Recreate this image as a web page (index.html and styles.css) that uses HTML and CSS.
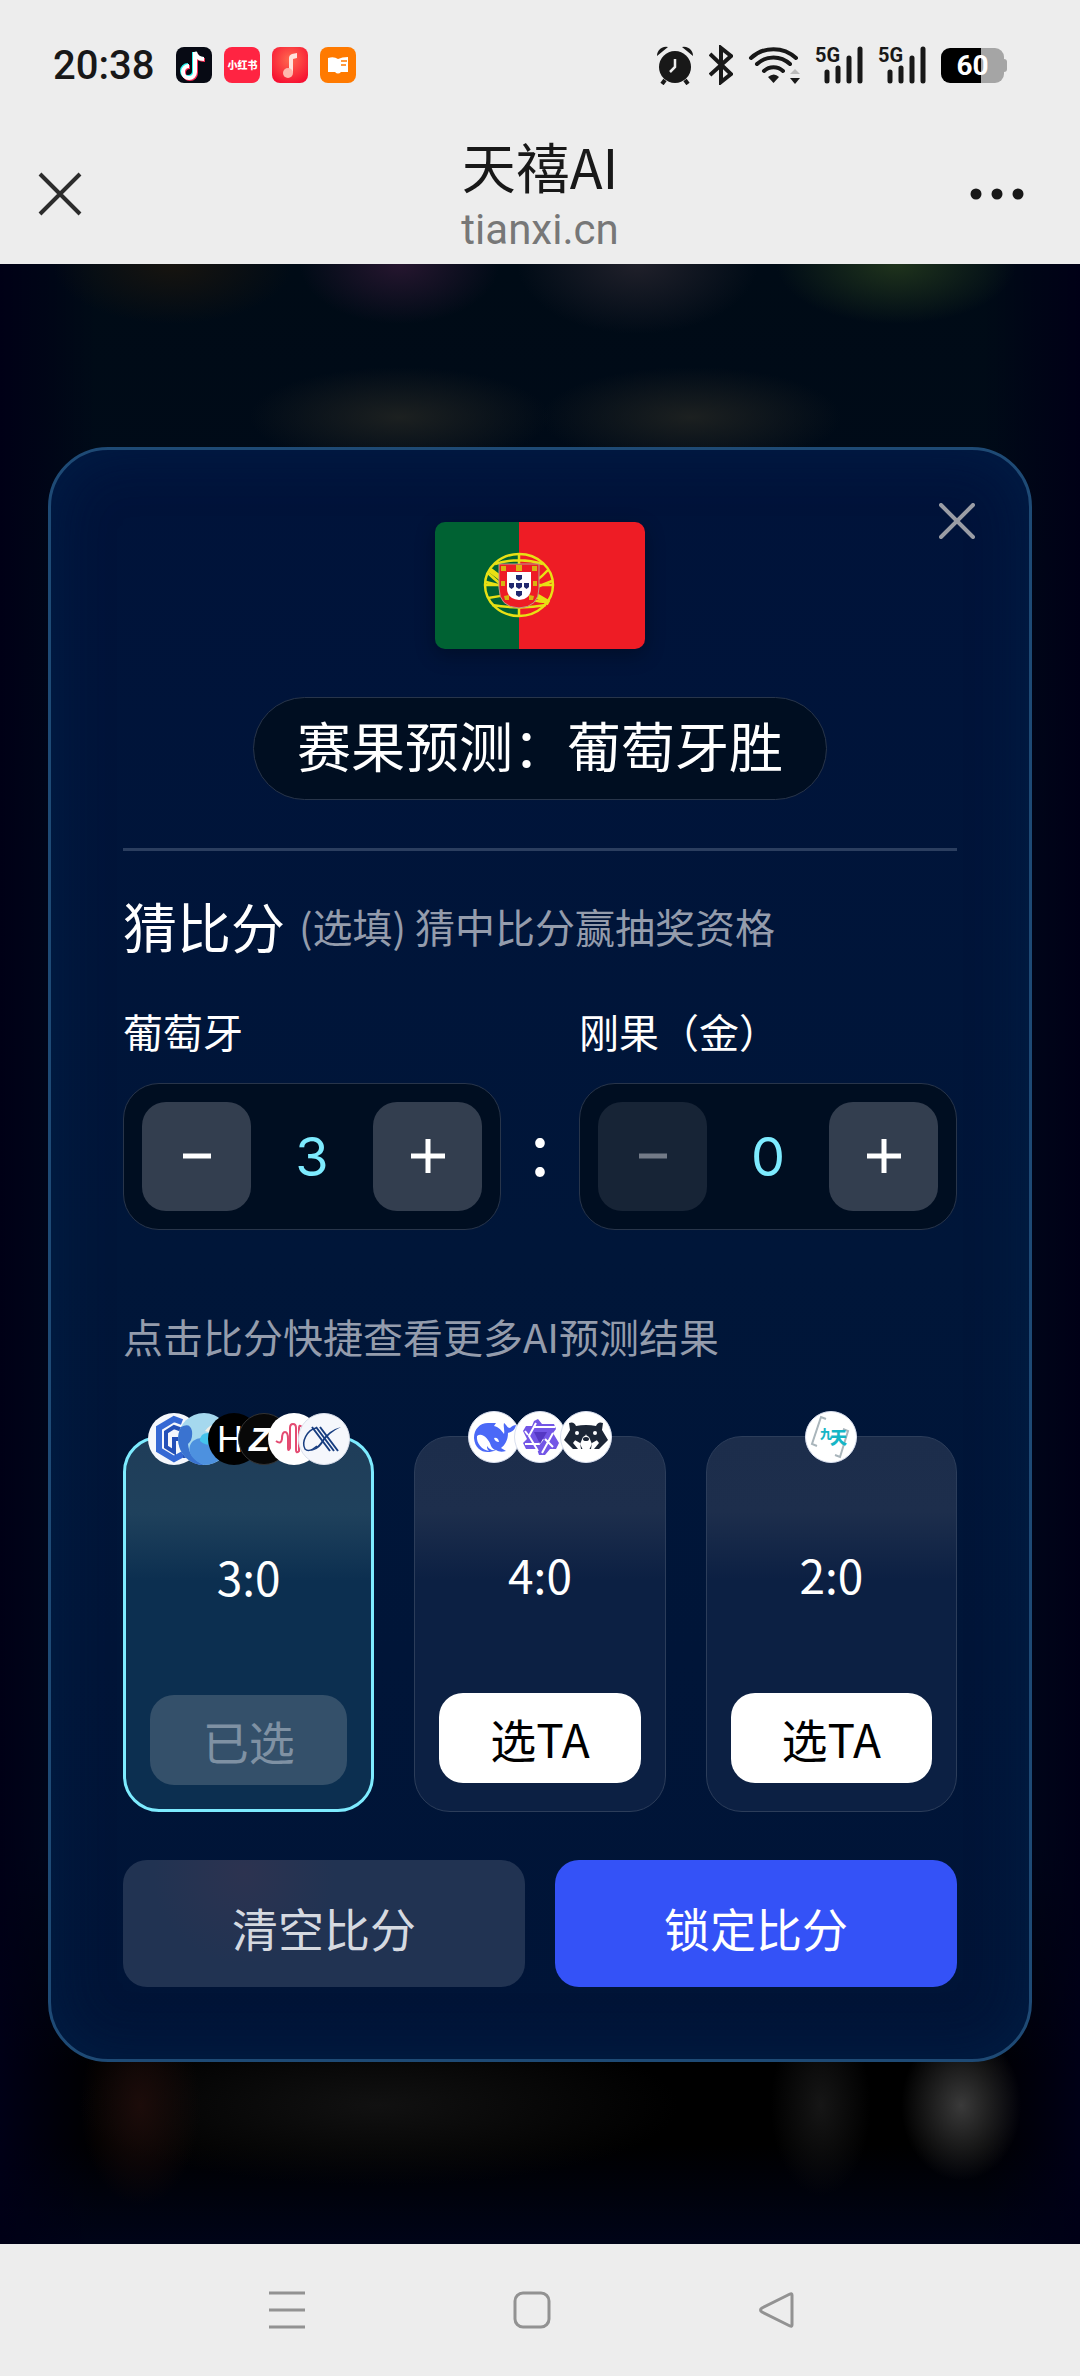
FILE: index.html
```html
<!DOCTYPE html>
<html lang="zh-CN">
<head>
  <meta charset="UTF-8">
  <meta name="viewport" content="width=device-width, initial-scale=1.0">
  <title>天禧AI</title>
  <link rel="stylesheet" href="styles.css">
</head>
<body>
  <div class="status">
    <div class="status-left">
      <span class="time">20:38</span>
      <span class="app tiktok">
        <svg viewBox="0 0 36 36" width="36" height="36" fill="none" stroke-width="4">
          <g stroke="#25f4ee"><path d="M18 5v19a6 6 0 1 1-6-6M18 5c1 4 4 7 9 7"/></g>
          <g stroke="#fe2c55"><path d="M20 7v19a6 6 0 1 1-6-6M20 7c1 4 4 6 9 6"/></g>
          <g stroke="#fff"><path d="M19 5v20a6 6 0 1 1-6-6M19 5c1 5 4 7 9 7"/></g>
        </svg>
      </span>
      <span class="app red">小红书</span>
      <span class="app music">
        <svg viewBox="0 0 36 36" width="36" height="36">
          <path d="M17 26V11q0-3 3-4l5-1v5l-4 1v14" fill="#ffe3dc"/>
          <circle cx="16" cy="26" r="5" fill="#ffb8ae"/>
        </svg>
      </span>
      <span class="app book">
        <svg viewBox="0 0 36 36" width="36" height="36">
          <path d="M8 11q6-2 10 1 4-2 10-2v15h-7q-3 3-6 0H8z" fill="#fff"/>
          <path d="M21 14h6M21 18h5" stroke="#ff7a00" stroke-width="1.5"/>
        </svg>
      </span>
    </div>
    <div class="status-right">
      <svg viewBox="0 0 38 40" width="38" height="40">
        <circle cx="19" cy="22" r="16" fill="#181818"/>
        <path d="M1 11a9 9 0 0 1 11-9zM37 11a9 9 0 0 0-11-9z" fill="#181818"/>
        <path d="M9 35l-3 4M29 35l3 4" stroke="#181818" stroke-width="4"/>
        <path d="M19 14v8l-5 5" fill="none" stroke="#ededed" stroke-width="2.5"/>
      </svg>
      <svg viewBox="0 0 24 40" width="24" height="40" fill="none" stroke="#181818" stroke-width="4">
        <path d="M1 9l21 20-10 8V3l10 8L1 30"/>
      </svg>
      <svg viewBox="0 0 52 40" width="52" height="40" fill="none" stroke="#181818" stroke-width="4" stroke-linecap="round">
        <path d="M3 13a33 33 0 0 1 45 0M9 19a24 24 0 0 1 33 0M16 26a14 14 0 0 1 19 0"/>
        <path d="M20 32q6-5 11 0l-5.500 6z" fill="#181818" stroke="none"/>
        <path d="M42 29l5-5 5 5z" fill="#bbb" stroke="none"/>
        <path d="M42 33h10l-5 6z" fill="#181818" stroke="none"/>
      </svg>
      <span class="signal">
        <b>5G</b>
        <svg viewBox="0 0 48 40" width="48" height="40"><path d="M12 27v9M23 23v13M34 13v23M45 4v32" stroke="#181818" stroke-width="5" stroke-linecap="round"/></svg>
      </span>
      <span class="signal">
        <b>5G</b>
        <svg viewBox="0 0 48 40" width="48" height="40"><path d="M12 27v9M23 23v13M34 13v23M45 4v32" stroke="#181818" stroke-width="5" stroke-linecap="round"/></svg>
      </span>
      <span class="battery">60</span>
    </div>
  </div>

  <header class="topbar">
    <button class="icon-btn" aria-label="关闭网页">
      <svg viewBox="0 0 44 44" width="44" height="44" stroke="#2c2c2c" stroke-width="4"><path d="M2 2l40 40M42 2L2 42"/></svg>
    </button>
    <div class="site">
      <h1>天禧AI</h1>
      <p>tianxi.cn</p>
    </div>
    <button class="icon-btn more" aria-label="更多">
      <svg viewBox="0 0 54 12" width="54" height="12" fill="#181818"><circle cx="6" cy="6" r="5.500"/><circle cx="27" cy="6" r="5.500"/><circle cx="48" cy="6" r="5.500"/></svg>
    </button>
  </header>

  <main class="stage">
    <section class="modal">
      <button class="close" aria-label="关闭">
        <svg viewBox="0 0 36 36" width="36" height="36" stroke="#9a9da5" stroke-width="4" stroke-linecap="round"><path d="M2 2l32 32M34 2L2 34"/></svg>
      </button>

      <svg class="flag" viewBox="0 0 210 127" width="210" height="127">
        <path fill="#006233" d="M0 0h84v127H0z"/>
        <path fill="#ee1c25" d="M84 0h126v127H84z"/>
        <g fill="none" stroke="#e8e014" stroke-width="2.5">
          <ellipse cx="84" cy="63" rx="34" ry="31"/>
          <path d="M84 32v62M50 63h68M53 51c18 18 44 30 60 29M53 76c20-2 44-10 60-28M57 83c18 3 38 3 54 0M60 42c16-5 32-5 48 0M51 60l24 6M117 59l-20 8"/>
          <path d="M55 48l12 9M102 74l12 7" stroke-width="5"/>
        </g>
        <path d="M64 42h40v24q0 19-20 20-20-1-20-20z" fill="#ee1c25" stroke="#b9a08c"/>
        <path d="M72 50h24v16q0 11-12 12-12-1-12-12z" fill="#fff"/>
        <path d="M81 53h6v4l-3 2-3-2zM81 61h6v4l-3 2-3-2zM81 69h6v4l-3 2-3-2zM74 61h5v4l-2.500 2-2.500-2zM89 61h5v4l-2.500 2-2.500-2z" fill="#20286e"/>
        <path d="M66 44h5v5h-5zM81 43h6v6h-6zM97 44h5v5h-5zM66 59h4v5h-4zM98 59h4v5h-4zM69 74l5-1v5h-4zM94 73l5 1-1 4h-4z" fill="#d9b310"/>
      </svg>

      <h2 class="result">赛果预测：葡萄牙胜</h2>
      <hr>

      <div class="guess-title">
        <h3>猜比分</h3>
        <p>(选填) 猜中比分赢抽奖资格</p>
      </div>

      <div class="score-row">
        <div class="team">
          <label for="home">葡萄牙</label>
          <div class="stepper">
            <button aria-label="减少"><svg viewBox="0 0 40 40" width="40" height="40"><path d="M6 20h28" stroke="#fff" stroke-width="5"/></svg></button>
            <input id="home" type="text" inputmode="numeric" value="3">
            <button aria-label="增加"><svg viewBox="0 0 40 40" width="40" height="40"><path d="M3 20h34M20 3v34" stroke="#fff" stroke-width="5"/></svg></button>
          </div>
        </div>
        <span class="colon">:</span>
        <div class="team">
          <label for="away">刚果（金）</label>
          <div class="stepper">
            <button aria-label="减少" disabled><svg viewBox="0 0 40 40" width="40" height="40"><path d="M6 20h28" stroke="#737b88" stroke-width="5"/></svg></button>
            <input id="away" type="text" inputmode="numeric" value="0">
            <button aria-label="增加"><svg viewBox="0 0 40 40" width="40" height="40"><path d="M3 20h34M20 3v34" stroke="#fff" stroke-width="5"/></svg></button>
          </div>
        </div>
      </div>

      <p class="hint">点击比分快捷查看更多AI预测结果</p>

      <div class="cards">
        <article class="card selected">
          <div class="avatars tight">
            <svg class="avatar" viewBox="0 0 52 52">
              <circle cx="26" cy="26" r="26" fill="#f5f7fc"/>
              <path d="M34 9l-8-3L11 15v22l15 9 13-7" fill="none" stroke="#3568d4" stroke-width="6"/>
              <path d="M37 18l-11-4-8 5v15l8 5V26h11v19" fill="none" stroke="#2450b8" stroke-width="4"/>
            </svg>
            <svg class="avatar" viewBox="0 0 52 52">
              <circle cx="26" cy="26" r="26" fill="#a5d8ee"/>
              <path d="M3 14q9-5 11 4 1 9-4 13 1 14 16 21A26 26 0 0 1 3 14" fill="#3a73d0"/>
              <path d="M26 52C11 46 8 35 15 28q8-6 17 0 8 7 20-3a26 26 0 0 1-26 27" fill="#4d91df"/>
              <path d="M22 28q0-8 8-8 8 1 7 7-5 9-15 1" fill="#44c3ec"/>
              <path d="M27 18q6-8 14-6-7 2-7 8z" fill="#f4efe5"/>
            </svg>
            <svg class="avatar" viewBox="0 0 52 52">
              <circle cx="26" cy="26" r="26" fill="#000"/>
              <text x="9" y="39" class="logo-h">H</text>
            </svg>
            <svg class="avatar" viewBox="0 0 52 52">
              <circle cx="26" cy="26" r="25.500" fill="#080808" stroke="#333"/>
              <text x="11" y="38" class="logo-z">Z</text>
            </svg>
            <svg class="avatar" viewBox="0 0 52 52">
              <circle cx="26" cy="26" r="26" fill="#fff"/>
              <path d="M8 28q5 4 6-2 0-7 3-7t3 7v9q0 4 2 0V15q0-4 3-4t3 4v22q0 4 3 1V15q0-4 3-1v20q4 3 5-3V20" fill="none" stroke="#e44b72" stroke-width="2"/>
            </svg>
            <svg class="avatar" viewBox="0 0 52 52">
              <circle cx="26" cy="26" r="25.500" fill="#f5f7fc" stroke="#dbe0ec"/>
              <path d="M14 14l18 24M18 14l18 24M22 14l18 24" stroke="#173d80" stroke-width="2" fill="none"/>
              <path d="M18 15C9 17 3 29 7 36q4 4 12-3" stroke="#173d80" stroke-width="1.5" fill="none"/>
              <path d="M43 14Q30 20 24 31q-5 7-13 7 7-2 12-9 7-12 20-15" fill="#173d80"/>
            </svg>
          </div>
          <p class="score">3:0</p>
          <button class="pick" disabled>已选</button>
        </article>

        <article class="card">
          <div class="avatars">
            <svg class="avatar" viewBox="0 0 52 52">
              <circle cx="26" cy="26" r="25.500" fill="#fff" stroke="#d9dfee"/>
              <path d="M6 27c0-9 6-15 14-15h8l-2 3c5 1 8 5 10 8 1-4-1-7 0-11 3 2 3 5 6 5 2-2 4-3 6-3-1 5-4 7-8 8 0 7-3 12-7 15l5 3c-4 1-7 1-10-1-10 5-21 1-22-12" fill="#4b69f7"/>
              <path d="M9 25c5-4 12 3 14 10 1 2 3 4 5 4-4 1-7-1-9-4 0 2 0 3 2 5-7-1-13-8-12-15" fill="#fff"/>
              <path d="M26 27q4-1 5 4-4 0-5-4" fill="#fff"/>
            </svg>
            <svg class="avatar" viewBox="0 0 52 52">
              <circle cx="26" cy="26" r="25.500" fill="#fff" stroke="#d9dfee"/>
              <path d="M20 10l4-2 4 5h12l2 5-3 4 6 10-3 6h-6l-5 6h-6l-2-6H12l-3-6 4-4-4-8 3-5h6z" fill="#7356e6"/>
              <path d="M20 16h21M22 12l-7 13 9 15M39 22L28 42M11 33h14l4-5M14 24l-3-4M31 28l8 8" stroke="#fff" stroke-width="2" fill="none"/>
              <path d="M20 21h13l-7 12z" fill="#5538c4"/>
            </svg>
            <svg class="avatar" viewBox="0 0 52 52">
              <circle cx="26" cy="26" r="25.500" fill="#fff" stroke="#d9dfee"/>
              <path d="M9 12q5-2 7 3 10-2 20 0 2-5 7-3l-1 7 6 10-9 9h-5l5-6-7-9H20l-7 9 5 6h-5l-9-9 6-10z" fill="#1c2636"/>
              <path d="M16 21h9l1 3 1-3h9l3 7-7 4-1 6h-10l-1-6-7-4z" fill="#1c2636"/>
              <path d="M20 33l3-7 3-2 3 2 3 7-3 6h-6z" fill="#fff"/>
              <ellipse cx="26" cy="28" rx="3" ry="2" fill="#1c2636"/>
              <circle cx="17" cy="22" r="2" fill="#fff"/><circle cx="35" cy="22" r="2" fill="#fff"/>
            </svg>
          </div>
          <p class="score">4:0</p>
          <button class="pick">选TA</button>
        </article>

        <article class="card">
          <div class="avatars">
            <svg class="avatar" viewBox="0 0 52 52">
              <circle cx="26" cy="26" r="25.500" fill="#fff" stroke="#d9dfee"/>
              <path d="M21 8l-5-2L7 33l5 2M38 18l5 2-8 26-5-2" fill="none" stroke="#a9b5bb" stroke-width="2"/>
              <text x="15" y="28" class="logo-jt">九<tspan class="big" dx="-2" dy="5">天</tspan></text>
            </svg>
          </div>
          <p class="score">2:0</p>
          <button class="pick">选TA</button>
        </article>
      </div>

      <div class="actions">
        <button class="action clear">清空比分</button>
        <button class="action lock">锁定比分</button>
      </div>
    </section>
  </main>

  <nav class="sysnav">
    <button class="icon-btn" aria-label="最近任务">
      <svg viewBox="0 0 38 38" width="38" height="38" stroke="#929292" stroke-width="3"><path d="M1 2h36M1 19h36M1 36h36"/></svg>
    </button>
    <button class="icon-btn" aria-label="主屏幕">
      <svg viewBox="0 0 38 38" width="38" height="38" fill="none" stroke="#929292" stroke-width="3"><rect x="2" y="2" width="34" height="34" rx="8"/></svg>
    </button>
    <button class="icon-btn" aria-label="返回">
      <svg viewBox="0 0 38 38" width="38" height="38" fill="none" stroke="#929292" stroke-width="3" stroke-linejoin="round"><path d="M34 4v30q0 2-2 1L4 21q-3-2 0-4L32 3q2-1 2 1z"/></svg>
    </button>
  </nav>
</body>
</html>
```

FILE: styles.css
```css
*{
  box-sizing: border-box;
}
body{
  margin: 0;
  min-height: 100vh;
  display: flex;
  flex-direction: column;
  background: #ededed;
  color: white;
  font-family: "Noto Sans CJK SC", sans-serif;
}
h1, h2, h3, p{
  margin: 0;
  font-weight: normal;
}
button{
  font-family: inherit;
  border: none;
  padding: 0;
  cursor: pointer;
}
svg{
  display: block;
}
.icon-btn{
  background: none;
}

/* phone status bar */
.status{
  display: flex;
  justify-content: space-between;
  align-items: center;
  height: 130px;
  padding: 0 76px 0 53px;
}
.status-left, .status-right{
  display: flex;
  align-items: center;
}
.status-left{
  gap: 12px;
}
.time{
  color: #181818;
  font-family: Roboto, sans-serif;
  font-size: 40px;
  font-weight: 500;
  margin-right: 10px;
}
.app{
  width: 36px;
  height: 36px;
  border-radius: 8px;
  overflow: hidden;
}
.tiktok{
  background: #070a14;
}
.red{
  background: #ff2442;
  font-size: 10px;
  font-weight: 900;
  line-height: 36px;
  text-align: center;
}
.music{
  background: radial-gradient(circle at 50% 35%, #ff6a50, #f5002c);
}
.book{
  background: #ff7a00;
}
.status-right{
  gap: 15px;
}
.signal{
  position: relative;
}
.signal b{
  position: absolute;
  left: 0;
  top: 0;
  color: #181818;
  font: 700 20px/20px Roboto, sans-serif;
}
.battery{
  position: relative;
  width: 63px;
  height: 35px;
  border-radius: 9px;
  background: linear-gradient(90deg, #000 40px, #a5a5a5 40px);
  font: 700 28px/36px Roboto, sans-serif;
  text-align: center;
}
.battery::after{
  content: "";
  position: absolute;
  right: -3px;
  top: 11px;
  width: 3px;
  height: 13px;
  border-radius: 0 3px 3px 0;
  background: #a5a5a5;
}

.topbar{
  display: grid;
  grid-template-columns: 1fr auto 1fr;
  align-items: center;
  justify-items: start;
  height: 134px;
  padding: 0 56px 10px 38px;
}
.topbar{
  padding-left: 38px;
  padding-right: 38px;
}
.more{
  justify-self: end;
  margin-right: 18px;
}
.site{
  text-align: center;
}
.site h1{
  color: #181818;
  font-size: 54px;
  line-height: 72px;
}
.site p{
  color: #777;
  font-family: Roboto, sans-serif;
  font-size: 42px;
  line-height: 56px;
}

/* dimmed page behind the dialog */
.stage{
  flex: 1;
  display: flex;
  align-items: center;
  padding: 48px;
  background:
    radial-gradient(60px 75px at 89% 93%, #3a3a3a, transparent),
    radial-gradient(50px 90px at 76% 93%, #161616, transparent),
    radial-gradient(60px 100px at 13% 93%, #1c0c0a, transparent),
    radial-gradient(300px 80px at 35% 93%, #111, transparent),
    radial-gradient(120px 60px at 16% 0, #17140f, transparent),
    radial-gradient(100px 60px at 37% 0, #26162f, transparent),
    radial-gradient(120px 70px at 59% 0, #20202a, transparent),
    radial-gradient(120px 60px at 83% 0, #1f331c, transparent),
    radial-gradient(150px 50px at 37% 153px, #1c2020, transparent),
    radial-gradient(150px 50px at 64% 153px, #1c2020, transparent),
    linear-gradient(90deg, #000016, transparent 9%, transparent 91%, #000016),
    linear-gradient(#000b16, #000a1c 30%, #000a1c 80%, #000 91%, #000 95%, #000418);
}
.modal{
  position: relative;
  flex: 1;
  min-width: 0;
  display: flex;
  flex-direction: column;
  padding: 72px;
  border: 3px solid #1e4a75;
  border-radius: 60px;
  background: linear-gradient(#00133a, #001639 50%, #001437);
  box-shadow: inset 0 0 60px rgba(0, 44, 90, 0.4);
}
.close{
  position: absolute;
  right: 54px;
  top: 53px;
  background: none;
}
.flag{
  align-self: center;
  border-radius: 10px;
  margin-bottom: 48px;
  box-shadow: 0 6px 20px rgba(0, 0, 0, 0.3);
}
.result{
  align-self: center;
  padding: 0 43px 8px;
  border: 1px solid #28354a;
  border-radius: 52px;
  background: #000e21;
  font-size: 54px;
  line-height: 93px;
}
hr{
  width: 100%;
  height: 3px;
  margin: 48px 0 36px;
  border: none;
  background: #2b3e5f;
}
.guess-title{
  display: flex;
  align-items: center;
  gap: 14px;
  margin-bottom: 36px;
}
.guess-title h3{
  font-size: 54px;
  line-height: 78px;
}
.guess-title p, .hint{
  color: #949cac;
  font-size: 40px;
  line-height: 60px;
}

.score-row{
  display: flex;
  align-items: flex-end;
}
.team{
  flex: 1;
  min-width: 0;
}
.team label{
  display: block;
  font-size: 40px;
  line-height: 60px;
  margin-bottom: 22px;
}
.stepper{
  display: flex;
  align-items: center;
  padding: 18px;
  border: 1px solid #28354a;
  border-radius: 36px;
  background: #000e21;
}
.stepper button{
  flex: none;
  display: flex;
  justify-content: center;
  align-items: center;
  width: 109px;
  height: 109px;
  border-radius: 24px;
  background: #333e4f;
}
.stepper button:disabled{
  background: #172436;
}
.stepper input{
  flex: 1;
  width: 0;
  min-width: 0;
  padding: 0;
  border: none;
  background: none;
  color: #7debff;
  font-family: Inter, sans-serif;
  font-size: 54px;
  text-align: center;
}
.colon{
  width: 78px;
  height: 147px;
  font-size: 72px;
  line-height: 124px;
  text-align: center;
}
.hint{
  margin: 76px 0 70px;
}

.cards{
  display: grid;
  grid-template-columns: repeat(3, 1fr);
  gap: 40px;
}
.card{
  position: relative;
  display: flex;
  flex-direction: column;
  padding: 107px 24px 28px;
  border: 1px solid #2c3d5a;
  border-radius: 36px;
  background: linear-gradient(#1c2d4b, #1d2e4c 20%, #0c2043 38%, #0c2043);
}
.selected{
  padding-bottom: 24px;
  border: 3px solid #7debff;
  background: linear-gradient(#1f3d59, #1f415c 20%, #0c2f50 38%, #0c2f50);
}
.avatars{
  position: absolute;
  top: -26px;
  left: 0;
  right: 0;
  display: flex;
  justify-content: center;
}
.avatar{
  flex: none;
  width: 52px;
  height: 52px;
}
.avatar + .avatar{
  margin-left: -6px;
}
.tight .avatar + .avatar{
  margin-left: -22px;
}
.logo-h{
  fill: white;
  font: 36px "Liberation Sans", sans-serif;
}
.logo-z{
  fill: white;
  font: italic 700 34px "Liberation Sans", sans-serif;
}
.logo-jt{
  fill: #16b6c6;
  font-size: 12px;
  font-weight: 900;
}
.big{
  font-size: 17px;
}
.score{
  font-size: 46px;
  line-height: 60px;
  margin-bottom: 89px;
  text-align: center;
}
.pick{
  height: 90px;
  border-radius: 24px;
  background: white;
  color: black;
  font-size: 46px;
}
.pick:disabled{
  background: #34506a;
  color: #7f91a3;
}

.actions{
  display: grid;
  grid-template-columns: 1fr 1fr;
  gap: 30px;
  margin-top: 48px;
}
.action{
  height: 127px;
  padding-top: 8px;
  border-radius: 24px;
  font-size: 46px;
}
.clear{
  background: radial-gradient(circle at 30% 10%, #2c3350, #213352 30%);
  color: #d5d9e0;
}
.lock{
  background: #3452f7;
  color: white;
}

.sysnav{
  display: flex;
  justify-content: center;
  align-items: center;
  gap: 207px;
  height: 132px;
  padding-right: 16px;
}
```
